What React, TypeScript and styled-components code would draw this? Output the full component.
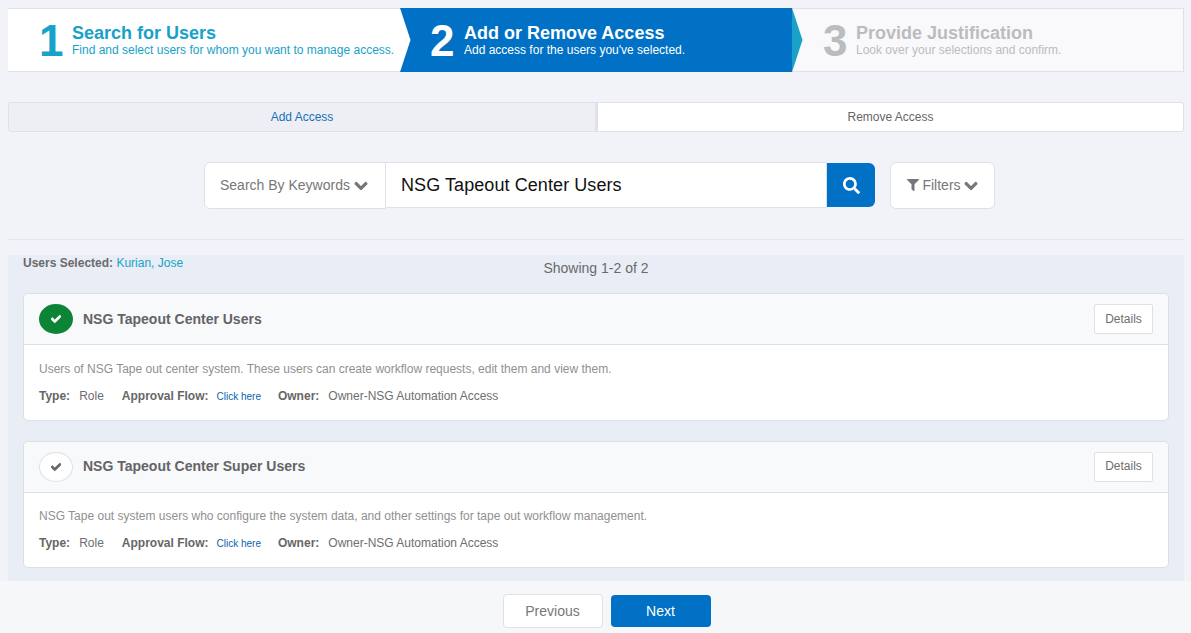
import React from "react";
import styled, { createGlobalStyle } from "styled-components";
import { FaCheck, FaChevronDown, FaFilter, FaSearch } from "react-icons/fa";

const GlobalStyle = createGlobalStyle`
  html, body {
    margin: 0;
    padding: 0;
    background: #f1f3f8;
    font-family: "Liberation Sans", Arial, sans-serif;
    overflow: hidden;
  }
`;

const Page = styled.div`
  width: 1191px;
  height: 633px;
  display: flex;
  flex-direction: column;
  overflow: hidden;
`;

const Top = styled.div`
  padding: 8px 7px 0 8px;
`;

const Wizard = styled.div`
  display: flex;
  height: 64px;
`;

type StepKind = "done" | "active" | "todo";

const stepBg = { done: "#fff", active: "#0071c5", todo: "#f9f9fb" };
const stepFg = { done: "#18a2c9", active: "#fff", todo: "#bbbcbe" };
const arrowFg = { done: "#fff", active: "#18a2c9", todo: "transparent" };

const Step = styled.div<{ $kind: StepKind; $pad: number }>`
  position: relative;
  box-sizing: border-box;
  width: 392px;
  height: 64px;
  padding-left: ${(p) => p.$pad}px;
  display: flex;
  align-items: center;
  background: ${(p) => stepBg[p.$kind]};
  color: ${(p) => stepFg[p.$kind]};
  border-style: solid;
  border-color: #dfe1e6;
  border-width: ${(p) => (p.$kind === "active" ? "0" : "1px 0")};
  ${(p) => p.$kind === "todo" && "border-right-width: 1px;"}

  &::after {
    content: "";
    position: absolute;
    z-index: 2;
    top: ${(p) => (p.$kind === "active" ? "0" : "-1px")};
    left: 100%;
    width: 10.5px;
    height: 64px;
    background: ${(p) => arrowFg[p.$kind]};
    clip-path: polygon(0 0, 100% 50%, 0 100%);
  }
`;

const StepNumber = styled.div<{ $width: number }>`
  font-size: 44px;
  font-weight: 700;
  line-height: 44px;
  width: ${(p) => p.$width}px;
  margin-top: 1px;
`;

const StepText = styled.div`
  margin-top: 1px;
`;

const StepTitle = styled.div`
  font-size: 18px;
  font-weight: 700;
  line-height: 18px;
`;

const StepSub = styled.div`
  font-size: 12px;
  line-height: 14px;
  margin-top: 1px;
`;

const Tabs = styled.div`
  display: flex;
  margin-top: 30px;
`;

const Tab = styled.div<{ $active?: boolean }>`
  box-sizing: border-box;
  width: 588px;
  height: 30px;
  display: flex;
  align-items: center;
  justify-content: center;
  font-size: 12px;
  color: ${(p) => (p.$active ? "#1a6fb5" : "#666")};
  background: ${(p) => (p.$active ? "#edeff4" : "#fff")};
  border: 1px solid #dfe1e6;
  border-radius: ${(p) => (p.$active ? "3px 0 0 3px" : "0 3px 3px 0")};
  ${(p) => !p.$active && "border-left-width: 2px;"}
`;

const SearchRow = styled.div`
  display: flex;
  align-items: flex-start;
  margin: 30px 0 0 196px;
`;

const KeywordSelect = styled.div`
  box-sizing: border-box;
  width: 182px;
  height: 47px;
  display: flex;
  align-items: center;
  gap: 4px;
  padding: 0 0 2px 15px;
  background: #fff;
  border: 1px solid #dfe1e6;
  border-radius: 6px 0 0 6px;
  font-size: 14px;
  color: #777;
`;

const SearchInput = styled.div`
  box-sizing: border-box;
  width: 441px;
  height: 46px;
  display: flex;
  align-items: center;
  padding-left: 15px;
  background: #fff;
  border: 1px solid #dfe1e6;
  border-left: 0;
  font-size: 18px;
  letter-spacing: 0.08px;
  color: #111;
`;

const SearchButton = styled.div`
  width: 48px;
  height: 44px;
  margin-top: 1px;
  display: flex;
  align-items: center;
  justify-content: center;
  background: #0071c5;
  color: #fff;
  border-radius: 0 6px 6px 0;
  font-size: 17px;
`;

const FilterButton = styled.div`
  box-sizing: border-box;
  width: 105px;
  height: 47px;
  margin-left: 15px;
  display: flex;
  align-items: center;
  justify-content: center;
  gap: 3px;
  padding-bottom: 2px;
  background: #fff;
  border: 1px solid #dfe1e6;
  border-radius: 6px;
  font-size: 14px;
  color: #777;
`;

const Chevron = styled(FaChevronDown)`
  width: 14px;
  height: 14px;
  margin-top: 2px;
  stroke: currentColor;
  stroke-width: 40;
`;

const Divider = styled.div`
  height: 1px;
  background: #e3e5ea;
  margin-top: 30px;
`;

const Results = styled.div`
  box-sizing: border-box;
  margin: 15px 7px 0 8px;
  height: 326px;
  padding: 0 15px;
  background: #e9edf5;
`;

const ResultsTop = styled.div`
  position: relative;
  height: 38px;
  text-align: center;
  font-size: 14px;
  line-height: 15px;
  padding-top: 6px;
  box-sizing: border-box;
  color: #6a6a6c;
`;

const Selected = styled.div`
  position: absolute;
  left: 0;
  top: 1px;
  font-size: 12px;
  line-height: 14px;
  color: #6a6a6c;
  font-weight: 700;
`;

const SelectedName = styled.span`
  font-weight: 400;
  color: #18a2c9;
`;

const Card = styled.div<{ $height: number }>`
  box-sizing: border-box;
  height: ${(p) => p.$height}px;
  margin-bottom: 20px;
  background: #fff;
  border: 1px solid #dcdfe5;
  border-radius: 5px;
  overflow: hidden;
`;

const CardHead = styled.div`
  box-sizing: border-box;
  height: 51px;
  padding: 0 15px;
  display: flex;
  align-items: center;
  background: #f8f9fb;
  border-bottom: 1px solid #dcdfe5;
`;

const CheckCircle = styled.div<{ $on?: boolean }>`
  box-sizing: border-box;
  width: 34px;
  height: 30px;
  flex: none;
  display: flex;
  align-items: center;
  justify-content: center;
  border-radius: 50%;
  color: ${(p) => (p.$on ? "#fff" : "#666")};
  background: ${(p) => (p.$on ? "#0b8436" : "#fff")};
  border: ${(p) => (p.$on ? "0" : "1px solid #dcdfe5")};
`;

const CheckMark = styled(FaCheck)`
  width: 10px;
  height: 10px;
  stroke: currentColor;
  stroke-width: 50;
`;

const CardTitle = styled.div<{ $lift: number }>`
  flex: 1;
  margin: 0 0 ${(p) => p.$lift}px 10px;
  font-size: 14px;
  font-weight: 700;
  color: #636466;
`;

const DetailsButton = styled.div<{ $lift: number }>`
  box-sizing: border-box;
  width: 59px;
  height: 30px;
  display: flex;
  align-items: center;
  justify-content: center;
  padding-bottom: ${(p) => p.$lift}px;
  background: #fff;
  border: 1px solid #dfe1e6;
  border-radius: 2px;
  font-size: 12px;
  color: #6e6e70;
`;

const CardBody = styled.div<{ $top: number }>`
  padding: ${(p) => p.$top}px 15px 0;
`;

const Description = styled.div`
  font-size: 12px;
  line-height: 14px;
  color: #8f9092;
`;

const Meta = styled.div`
  display: flex;
  align-items: baseline;
  margin-top: 13px;
  font-size: 12px;
  line-height: 14px;
  color: #6e6e70;
`;

const MetaLabel = styled.span`
  font-weight: 700;
  color: #666;
  margin-right: 9px;
`;

const MetaValue = styled.span<{ $gap?: number }>`
  margin-right: ${(p) => p.$gap ?? 0}px;
`;

const MetaLink = styled.span`
  font-size: 10px;
  color: #0a64ad;
  margin: 0 17px 0 -1px;
`;

const Footer = styled.div`
  flex: 1;
  display: flex;
  justify-content: center;
  align-items: flex-start;
  gap: 8px;
  padding: 13px 0 0 22px;
  background: #f6f7f9;
`;

const FooterButton = styled.div<{ $primary?: boolean }>`
  box-sizing: border-box;
  width: 100px;
  height: ${(p) => (p.$primary ? "32px" : "34px")};
  margin-top: ${(p) => (p.$primary ? "1px" : "0")};
  display: flex;
  align-items: center;
  justify-content: center;
  font-size: 14px;
  border-radius: 4px;
  color: ${(p) => (p.$primary ? "#fff" : "#777")};
  background: ${(p) => (p.$primary ? "#0071c5" : "#fff")};
  border: ${(p) => (p.$primary ? "0" : "1px solid #dfe1e6")};
`;

const steps: { kind: StepKind; pad: number; numWidth: number; n: number; title: string; sub: string }[] = [
  { kind: "done", pad: 31, numWidth: 33, n: 1, title: "Search for Users", sub: "Find and select users for whom you want to manage access." },
  { kind: "active", pad: 30, numWidth: 34, n: 2, title: "Add or Remove Access", sub: "Add access for the users you've selected." },
  { kind: "todo", pad: 31, numWidth: 33, n: 3, title: "Provide Justification", sub: "Look over your selections and confirm." },
];

const roles = [
  {
    name: "NSG Tapeout Center Users",
    on: true,
    height: 128,
    lift: 0,
    bodyTop: 17,
    text: "Users of NSG Tape out center system. These users can create workflow requests, edit them and view them.",
  },
  {
    name: "NSG Tapeout Center Super Users",
    on: false,
    height: 127,
    lift: 2,
    bodyTop: 16,
    text: "NSG Tape out system users who configure the system data, and other settings for tape out workflow management.",
  },
];

export default function App() {
  return (
    <Page>
      <GlobalStyle />
      <Top>
        <Wizard>
          {steps.map((s) => (
            <Step key={s.n} $kind={s.kind} $pad={s.pad}>
              <StepNumber $width={s.numWidth}>{s.n}</StepNumber>
              <StepText>
                <StepTitle>{s.title}</StepTitle>
                <StepSub>{s.sub}</StepSub>
              </StepText>
            </Step>
          ))}
        </Wizard>
        <Tabs>
          <Tab $active>Add Access</Tab>
          <Tab>Remove Access</Tab>
        </Tabs>
        <SearchRow>
          <KeywordSelect>
            Search By Keywords <Chevron />
          </KeywordSelect>
          <SearchInput>NSG Tapeout Center Users</SearchInput>
          <SearchButton>
            <FaSearch />
          </SearchButton>
          <FilterButton>
            <FaFilter size={12} /> Filters <Chevron />
          </FilterButton>
        </SearchRow>
        <Divider />
      </Top>
      <Results>
        <ResultsTop>
          <Selected>
            Users Selected: <SelectedName>Kurian, Jose</SelectedName>
          </Selected>
          Showing 1-2 of 2
        </ResultsTop>
        {roles.map((r) => (
          <Card key={r.name} $height={r.height}>
            <CardHead>
              <CheckCircle $on={r.on}>
                <CheckMark />
              </CheckCircle>
              <CardTitle $lift={r.lift}>{r.name}</CardTitle>
              <DetailsButton $lift={r.lift}>Details</DetailsButton>
            </CardHead>
            <CardBody $top={r.bodyTop}>
              <Description>{r.text}</Description>
              <Meta>
                <MetaLabel>Type:</MetaLabel>
                <MetaValue $gap={18}>Role</MetaValue>
                <MetaLabel>Approval Flow:</MetaLabel>
                <MetaLink>Click here</MetaLink>
                <MetaLabel>Owner:</MetaLabel>
                <MetaValue>Owner-NSG Automation Access</MetaValue>
              </Meta>
            </CardBody>
          </Card>
        ))}
      </Results>
      <Footer>
        <FooterButton>Previous</FooterButton>
        <FooterButton $primary>Next</FooterButton>
      </Footer>
    </Page>
  );
}
